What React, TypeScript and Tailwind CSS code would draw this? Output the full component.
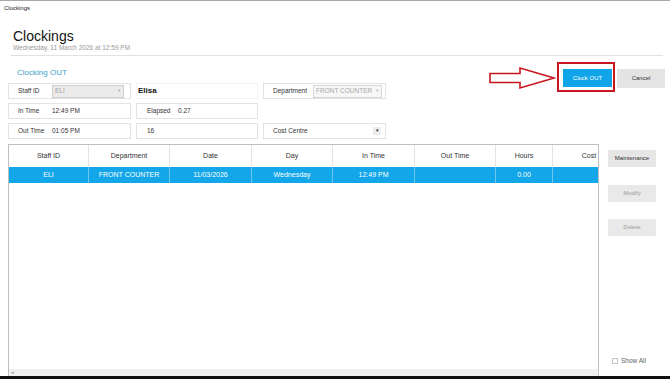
export default function App() {
  const cols = [
    { label: 'Staff ID', w: 'w-[80px]', v: 'ELI' },
    { label: 'Department', w: 'w-[81px]', v: 'FRONT COUNTER' },
    { label: 'Date', w: 'w-[82px]', v: '11/03/2026' },
    { label: 'Day', w: 'w-[81px]', v: 'Wednesday' },
    { label: 'In Time', w: 'w-[82px]', v: '12:49 PM' },
    { label: 'Out Time', w: 'w-[81px]', v: '' },
    { label: 'Hours', w: 'w-[57px]', v: '0.00' },
    { label: 'Cost', w: 'w-[73px]', v: '' },
  ];

  return (
    <div className="w-[670px] h-[379px] bg-white flex flex-col overflow-hidden border-t border-[#a8a8a8] font-['Liberation_Sans',Arial,sans-serif] text-[#333]">
      {/* title bar */}
      <div className="h-[15px] pl-[4px] pt-[3px] text-[6px] leading-[8px] text-[#222]">Clockings</div>

      {/* header */}
      <div className="pl-[13px] pt-[12px]">
        <h1 className="text-[14px] leading-[16px] text-[#111]">Clockings</h1>
        <p className="text-[6.5px] leading-[8px] text-[#9a9a9a]">Wednesday, 11 March 2026 at 12:59 PM</p>
      </div>
      <div className="ml-[10px] mr-[7px] mt-[3px] border-t border-[#e2e2e2]" />

      {/* form + top buttons */}
      <div className="flex">
        <div className="pt-[12px]">
          <div className="pl-[17px] text-[8px] leading-[10px] text-[#3ea2c6]">Clocking OUT</div>
          <div className="ml-[8px] mt-[5px] grid grid-cols-[123px_122px_123px] gap-x-[5px] gap-y-[4px] text-[6.5px]">
            <div className="h-[16px] border border-[#e3e3e3] flex items-center pl-[9px]">
              <span className="w-[34px]">Staff ID</span>
              <div className="w-[72px] h-[13px] bg-[#ebebeb] border border-[#cfcfcf] flex items-center justify-between pl-[2px] pr-[2px] text-[#9c9c9c]">
                <span>ELI</span>
                <span className="text-[5px] text-[#b5b5b5]">▾</span>
              </div>
            </div>
            <div className="h-[16px] border border-[#f4f4f4] flex items-center pl-[1px] text-[8px] font-bold text-[#111]">Elisa</div>
            <div className="h-[16px] border border-[#e3e3e3] flex items-center pl-[9px]">
              <span className="w-[40px]">Department</span>
              <div className="w-[69px] h-[13px] bg-[#f7f7f7] border border-[#d6d6d6] flex items-center justify-between pl-[2px] pr-[2px] text-[#a8a8a8]">
                <span>FRONT COUNTER</span>
                <span className="text-[5px] text-[#bdbdbd]">▾</span>
              </div>
            </div>

            <div className="h-[16px] border border-[#e3e3e3] flex items-center pl-[9px]">
              <span className="w-[34px]">In Time</span>
              <span>12:49 PM</span>
            </div>
            <div className="h-[16px] border border-[#e3e3e3] flex items-center pl-[10px]">
              <span className="w-[31px]">Elapsed</span>
              <span>0.27</span>
            </div>
            <div />

            <div className="h-[16px] border border-[#e3e3e3] flex items-center pl-[9px]">
              <span className="w-[34px]">Out Time</span>
              <span>01:05 PM</span>
            </div>
            <div className="h-[16px] border border-[#e3e3e3] flex items-center pl-[10px]">16</div>
            <div className="h-[16px] border border-[#e3e3e3] flex items-center justify-between pl-[9px] pr-[4px]">
              <span>Cost Centre</span>
              <span className="w-[8px] h-[8px] bg-[#ededed] flex items-center justify-center text-[5px] text-[#222]">▾</span>
            </div>
          </div>
        </div>

        <div className="flex-1 flex justify-end items-start gap-[5px] pr-[5px] pt-[13px] text-[6px]">
          <div className="relative">
            {/* annotation arrow */}
            <svg className="absolute left-[-75px] top-[-3px]" width="68" height="24" viewBox="0 0 68 24">
              <polygon
                points="2,7.5 32,7.5 32,2 66,12 32,22 32,16.5 2,16.5"
                fill="white"
                stroke="#c8161e"
                strokeWidth="1.6"
                strokeLinejoin="miter"
              />
            </svg>
            <div className="absolute left-[-6px] top-[-7px] w-[58px] h-[30px] border-2 border-[#c8161e]" />
            <button className="w-[49px] h-[18px] bg-[#10a5e8] text-white">Clock OUT</button>
          </div>
          <button className="w-[48px] h-[19px] bg-[#e4e4e4] text-[#333]">Cancel</button>
        </div>
      </div>

      {/* table + side buttons */}
      <div className="flex flex-1 mt-[5px] min-h-0">
        <div className="ml-[8px] w-[591px] border border-b-0 border-[#bfbfbf] flex flex-col overflow-hidden">
          <div className="flex h-[22px] shrink-0 text-[7px] text-[#333]">
            {cols.map((c) => (
              <div key={c.label} className={`${c.w} shrink-0 flex items-center justify-center border-r border-[#e4e4e4]`}>
                {c.label}
              </div>
            ))}
          </div>
          <div className="flex h-[16px] shrink-0 bg-[#13a6e8] text-[7px] text-white">
            {cols.map((c) => (
              <div key={c.label} className={`${c.w} shrink-0 flex items-center justify-center border-r border-[#6fc7ef]`}>
                {c.v}
              </div>
            ))}
          </div>
          <div className="flex-1" />
          <div className="h-[7px] bg-[#efefef] flex items-center pl-[2px]">
            <span className="text-[5px] text-[#9a9a9a] leading-none">◂</span>
          </div>
        </div>

        <div className="flex-1 flex flex-col pl-[9px] pt-[6px] text-[6px]">
          <button className="w-[48px] h-[17px] bg-[#e6e6e6] text-[#333]">Maintenance</button>
          <button className="w-[48px] h-[17px] mt-[18px] bg-[#e9e9e9] text-[#9a9a9a]">Modify</button>
          <button className="w-[48px] h-[17px] mt-[17px] bg-[#e9e9e9] text-[#9a9a9a]">Delete</button>
          <div className="mt-auto mb-[10px] ml-[4px] flex items-center gap-[3px] text-[6.5px] text-[#666]">
            <span className="w-[6px] h-[6px] border border-[#c4c4c4] bg-white" />
            <span>Show All</span>
          </div>
        </div>
      </div>

      <div className="h-[3px] bg-[#111] shrink-0" />
    </div>
  );
}
